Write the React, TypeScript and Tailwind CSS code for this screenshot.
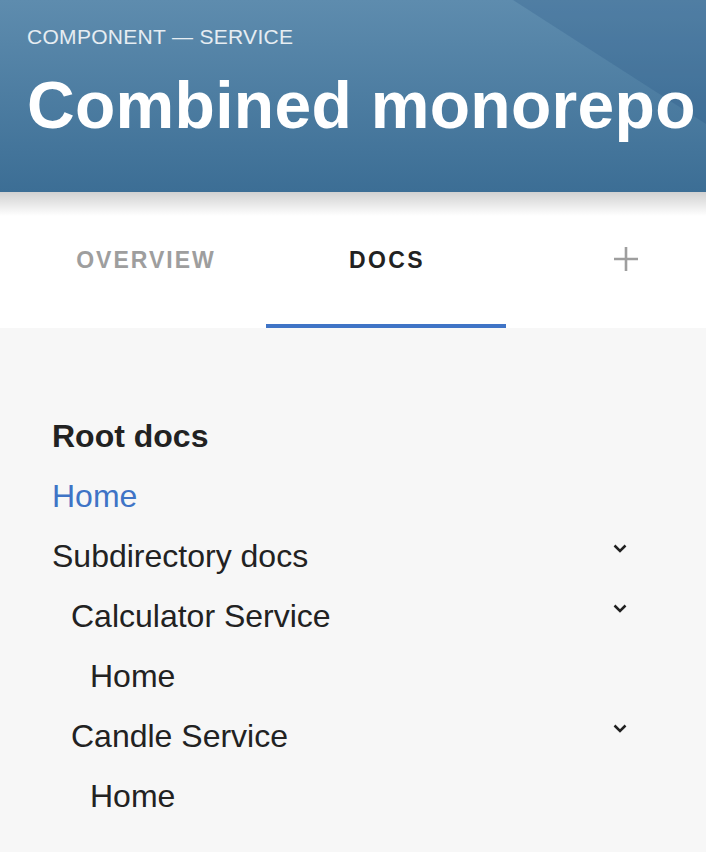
import { ReactNode } from "react";

const FONT = { fontFamily: '"Liberation Sans", Arial, Helvetica, sans-serif' };

function Chevron() {
  return (
    <svg width="14" height="9" viewBox="0 0 14 9" className="mt-[-15px] shrink-0">
      <path d="M1.5 1.5 L7 7 L12.5 1.5" fill="none" stroke="#222" strokeWidth="2.5" />
    </svg>
  );
}

function Row({
  indent = 0,
  children,
  expandable = false,
  className = "",
}: {
  indent?: number;
  children: ReactNode;
  expandable?: boolean;
  className?: string;
}) {
  const pad = indent === 0 ? "pl-0" : indent === 1 ? "pl-[19px]" : "pl-[38px]";
  return (
    <div className={`flex h-[60px] items-center justify-between ${pad}`}>
      <span className={`text-[32px] leading-none ${className}`}>{children}</span>
      {expandable && <Chevron />}
    </div>
  );
}

export default function App() {
  return (
    <div style={FONT} className="min-h-[852px] w-[706px] overflow-hidden bg-[#f7f7f7]">
      {/* HEADER */}
      <header className="relative h-[192px] overflow-hidden bg-[linear-gradient(to_bottom,#5e8cae,#3c6e95)] px-[27px] pt-[25px]">
        <svg className="absolute inset-0" width="706" height="192" viewBox="0 0 706 192">
          <polygon points="513,0 706,0 706,124" fill="#1e4f80" fillOpacity="0.22" />
        </svg>
        <p className="relative text-[21px] leading-[24px] tracking-[0.3px] text-white/85">COMPONENT — SERVICE</p>
        <h1 className="relative mt-[16px] whitespace-nowrap text-[66px] font-bold leading-[80px] tracking-[0.3px] text-white">
          Combined monorepo
        </h1>
      </header>

      {/* TABS */}
      <nav className="relative flex h-[136px] overflow-hidden bg-white pl-[26px]">
        <div className="pointer-events-none absolute inset-x-0 top-0 h-[24px] bg-[linear-gradient(to_bottom,rgba(0,0,0,0.18),rgba(0,0,0,0))]" />
        <div className="flex w-[240px] shrink-0 items-center justify-center">
          <span className="text-[23px] font-bold tracking-[2px] text-[#9e9e9e]">OVERVIEW</span>
        </div>
        <div className="relative flex w-[240px] shrink-0 items-center justify-center">
          <span className="ml-[2px] text-[23px] font-bold tracking-[2.4px] text-[#222]">DOCS</span>
          <div className="absolute inset-x-0 bottom-0 h-[4px] bg-[#3f74c6]" />
        </div>
        <div className="flex w-[240px] shrink-0 items-center justify-center">
          <svg width="26" height="26" viewBox="0 0 26 26" className="mb-[2px]">
            <path d="M13 1 V25 M1 13 H25" stroke="#9e9e9e" strokeWidth="2.6" />
          </svg>
        </div>
      </nav>

      {/* DOCS TREE */}
      <main className="pl-[52px] pr-[79px] pt-[78px]">
        <Row className="font-bold text-[#222]">Root docs</Row>
        <Row className="text-[#3f74c6]">Home</Row>
        <Row expandable className="text-[#222]">Subdirectory docs</Row>
        <Row indent={1} expandable className="text-[#222]">Calculator Service</Row>
        <Row indent={2} className="text-[#222]">Home</Row>
        <Row indent={1} expandable className="text-[#222]">Candle Service</Row>
        <Row indent={2} className="text-[#222]">Home</Row>
      </main>
    </div>
  );
}
